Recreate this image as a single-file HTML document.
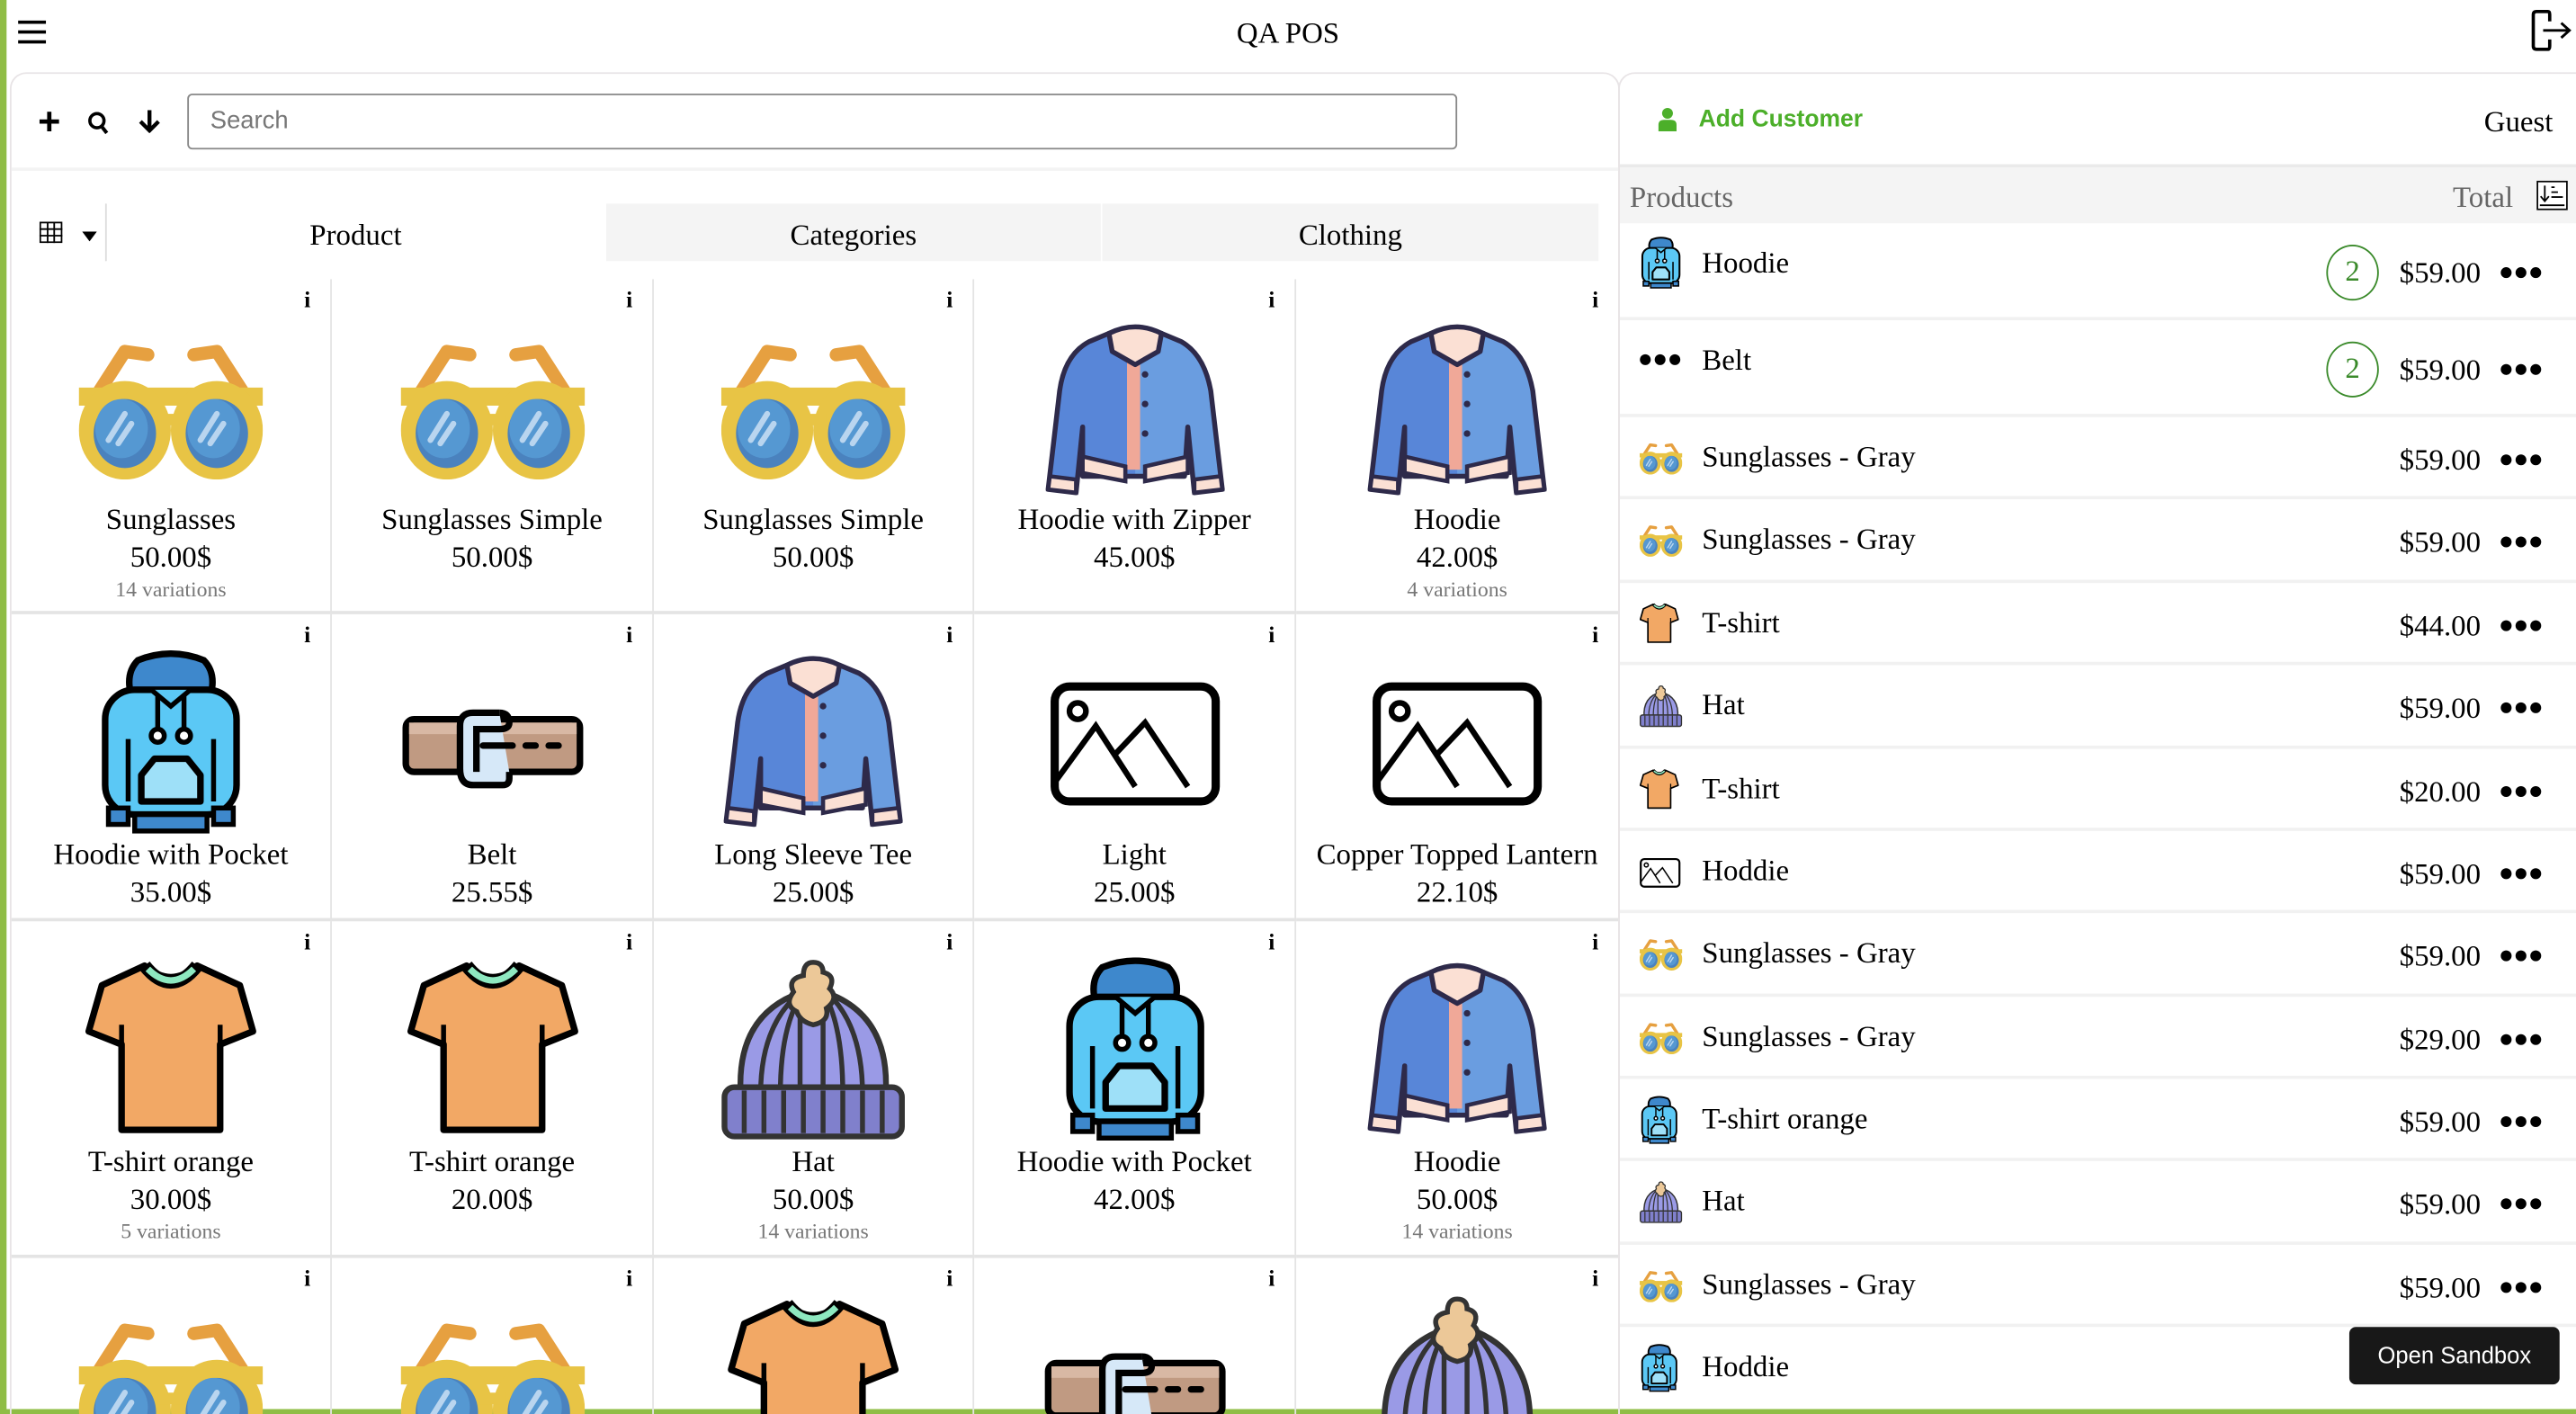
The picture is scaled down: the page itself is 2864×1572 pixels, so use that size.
<!DOCTYPE html>
<html><head><meta charset="utf-8">
<style>
*{box-sizing:border-box;margin:0;padding:0}
html,body{width:2864px;height:1572px;overflow:hidden;background:#fff}
#w{position:absolute;left:0;top:0;width:1568px;height:861px;transform:scale(1.82653,1.82578);transform-origin:0 0;font-family:"Liberation Serif",serif;color:#000;overflow:hidden}
.a{position:absolute}
.cell{position:absolute;border-right:1px solid #e4e4e4;border-bottom:2px solid #e4e4e4;overflow:hidden}
.cell .i{position:absolute;right:12px;top:6px;font:bold 14px "Liberation Serif",serif}
.cell svg{position:absolute;left:50%;top:22px;transform:translateX(-50%)}
.cell .n{position:absolute;left:0;right:0;top:135px;text-align:center;font-size:18px;line-height:23px;white-space:nowrap}
.cell .p{position:absolute;left:0;right:0;top:158px;text-align:center;font-size:18px;line-height:23px}
.cell .v{position:absolute;left:0;right:0;top:180px;text-align:center;font-size:13px;line-height:18px;color:#777}
.row{position:absolute;left:986px;width:582px;border-bottom:2px solid #f1f1f1}
.row svg{position:absolute;left:12px}
.row .t{position:absolute;left:50px;font-size:18px;line-height:22px}
.row .pr{position:absolute;right:58px;font-size:18px;line-height:22px}
.row svg.d{position:absolute;left:auto;right:21px}
.q{position:absolute;left:430px;width:32px;height:34px;border:1.5px solid #3a8a2a;border-radius:50%;color:#3a8a2a;text-align:center;font-size:18px;line-height:31px}
</style></head><body>
<svg width="0" height="0" style="position:absolute">
<defs>
<symbol id="dt" viewBox="0 0 25 8"><circle cx="3.5" cy="4" r="3.3"/><circle cx="12.5" cy="4" r="3.3"/><circle cx="21.5" cy="4" r="3.3"/></symbol>
<symbol id="sg" viewBox="0 0 112 86">
<path d="M10 36 L28 8 L42 10 M102 36 L84 8 L70 10" fill="none" stroke="#e6a040" stroke-width="8" stroke-linecap="round" stroke-linejoin="round"/>
<rect x="0" y="30" width="112" height="11" fill="#e8c445"/>
<ellipse cx="28" cy="56" rx="28" ry="30" fill="#e8c445"/>
<ellipse cx="84" cy="56" rx="28" ry="30" fill="#e8c445"/>
<rect x="48" y="46" width="16" height="7" fill="#e8c445"/>
<ellipse cx="28" cy="58" rx="19" ry="21" fill="#4a82be"/>
<ellipse cx="84" cy="58" rx="19" ry="21" fill="#4a82be"/>
<ellipse cx="26" cy="55" rx="16" ry="18" fill="#5598d2"/>
<ellipse cx="82" cy="55" rx="16" ry="18" fill="#5598d2"/>
<path d="M18 62 L28 46 M24 64 L32 52 M74 62 L84 46 M80 64 L88 52" stroke="#b9d5ef" stroke-width="3.5" stroke-linecap="round"/>
</symbol>
<symbol id="jk" viewBox="0 0 112 112">
<path d="M40 9 L28 14 Q13 22 10 44 L3 104 L20 106 L24 66 L24 96 L86 96 L88 66 L92 106 L109 104 L102 44 Q98 22 84 14 L72 9 Z" fill="#5886d8"/>
<path d="M56 20 L56 96 L86 96 L88 66 L92 106 L109 104 L102 44 Q98 22 84 14 L72 9 Z" fill="#6a9de0"/>
<path d="M40 9 L28 14 Q13 22 10 44 L3 104 L20 106 L24 66 L24 96 L86 96 L88 66 L92 106 L109 104 L102 44 Q98 22 84 14 L72 9 Z" fill="none" stroke="#2e2a4a" stroke-width="3" stroke-linejoin="round"/>
<rect x="51" y="22" width="8" height="70" fill="#f0a898"/>
<path d="M40 9 Q56 1 72 9 L70 20 L56 28 L42 20 Z" fill="#fbe0d4" stroke="#2e2a4a" stroke-width="3" stroke-linejoin="round"/>
<path d="M24 84 L50 90 L50 99 L24 94 Z M62 90 L88 84 L88 94 L62 99 Z" fill="#fbe0d4" stroke="#2e2a4a" stroke-width="2.5"/>
<path d="M4 96 L20 98 L20 106 L3 104 Z M92 98 L108 96 L109 104 L92 106 Z" fill="#fbe0d4" stroke="#2e2a4a" stroke-width="2.5"/>
<circle cx="62" cy="34" r="2" fill="#2e2a4a"/><circle cx="62" cy="52" r="2" fill="#2e2a4a"/><circle cx="62" cy="70" r="2" fill="#2e2a4a"/>
</symbol>
<symbol id="hd" viewBox="0 0 92 112">
<path d="M26 6 Q46 -2 66 6 Q74 14 70 28 L22 28 Q18 14 26 6 Z" fill="#3e88cc" stroke="#000" stroke-width="4"/>
<rect x="6" y="24" width="80" height="76" rx="18" fill="#5bc8f5" stroke="#000" stroke-width="4"/>
<path d="M34 24 L46 34 L58 24" fill="#5bc8f5" stroke="#000" stroke-width="3"/>
<path d="M38 28 V48 M54 28 V48" stroke="#000" stroke-width="3"/>
<circle cx="38" cy="52" r="4" fill="#fff" stroke="#000" stroke-width="3"/><circle cx="54" cy="52" r="4" fill="#fff" stroke="#000" stroke-width="3"/>
<path d="M20 54 V92 M72 54 V92" stroke="#000" stroke-width="3"/>
<path d="M28 76 L36 66 L56 66 L64 76 L64 92 L28 92 Z" fill="#9ee0f8" stroke="#000" stroke-width="4" stroke-linejoin="round"/>
<rect x="8" y="96" width="12" height="10" fill="#3e88cc" stroke="#000" stroke-width="3"/>
<rect x="72" y="96" width="12" height="10" fill="#3e88cc" stroke="#000" stroke-width="3"/>
<rect x="24" y="100" width="44" height="10" fill="#3e88cc" stroke="#000" stroke-width="3"/>
</symbol>
<symbol id="bt" viewBox="0 0 112 58">
<rect x="3" y="14" width="106" height="32" rx="5" fill="#c09a82" stroke="#000" stroke-width="4"/>
<rect x="5" y="16" width="102" height="7" fill="#d8b8a4"/>
<path d="M60 10 H44 Q36 10 36 18 V44 Q36 54 44 54 H62 Q66 54 66 50 V46" fill="#d6e8f8" stroke="#000" stroke-width="4"/>
<path d="M60 10 Q66 10 66 16 Q66 20 60 20 H46 V46" fill="none" stroke="#000" stroke-width="4"/>
<path d="M50 30 H68 M76 30 H82 M90 30 H96" stroke="#000" stroke-width="4" stroke-linecap="round"/>
</symbol>
<symbol id="ph" viewBox="0 0 104 76">
<rect x="3" y="3" width="98" height="70" rx="9" fill="#fff" stroke="#000" stroke-width="5"/>
<circle cx="17" cy="18" r="5" fill="none" stroke="#000" stroke-width="3.5"/>
<path d="M4 60 L28 27 L52 64 M40 44 L58 25 L84 64" fill="none" stroke="#000" stroke-width="3.5"/>
</symbol>
<symbol id="ts" viewBox="0 0 104 108">
<path d="M36 4 L10 16 L2 44 L22 52 L22 104 L82 104 L82 52 L102 44 L94 16 L68 4 Q52 18 36 4 Z" fill="#f2a865" stroke="#000" stroke-width="4" stroke-linejoin="round"/>
<path d="M36 4 Q52 24 68 4" fill="none" stroke="#000" stroke-width="8"/>
<path d="M38 6 Q52 20 66 6" fill="none" stroke="#8ee8c0" stroke-width="4"/>
<path d="M22 52 V40 M82 52 V40" stroke="#000" stroke-width="3"/>
</symbol>
<symbol id="ht" viewBox="0 0 112 110">
<path d="M12 84 Q8 30 56 18 Q104 30 100 84 Z" fill="#9a9ae6" stroke="#333" stroke-width="3.5"/>
<path d="M24 82 Q24 44 44 24 M36 82 Q36 40 50 20 M48 82 V20 M62 82 V20 M74 82 Q74 40 62 20 M86 82 Q86 44 68 24" fill="none" stroke="#333" stroke-width="3"/>
<path d="M56 2 q6 0 6 6 q8 2 4 10 q6 6 -2 12 q2 8 -8 10 q-8 -2 -10 -8 q-8 -4 -2 -12 q-4 -8 6 -10 q0 -8 6 -8 Z" fill="#ecc898" stroke="#333" stroke-width="3"/>
<rect x="2" y="78" width="108" height="30" rx="6" fill="#8080cc" stroke="#333" stroke-width="3.5"/>
<path d="M14 80 V106 M26 80 V106 M38 80 V106 M50 80 V106 M62 80 V106 M74 80 V106 M86 80 V106 M98 80 V106" stroke="#333" stroke-width="3"/>
</symbol>
</defs></svg>
<div id="w">
<div class="a" style="left:0;top:0;width:4px;height:861px;background:#8fbd45"></div>
<div class="a" style="left:0;top:858px;width:1568px;height:3px;background:#8fbd45"></div>
<svg class="a" style="left:11px;top:12px" width="17" height="15"><path d="M0 1.5H17M0 7.5H17M0 13.5H17" stroke="#000" stroke-width="2"/></svg>
<div class="a" style="left:684px;top:9px;width:200px;text-align:center;font-size:18px;line-height:22px">QA POS</div>
<svg class="a" style="left:1540px;top:5px" width="26" height="27"><path d="M11 2H4Q2 2 2 4V23Q2 25 4 25H11Q12 25 12 23V19M12 8V4Q12 2 11 2" fill="none" stroke="#000" stroke-width="2"/><path d="M8 13.5H24M19 9L24 13.5L19 18" fill="none" stroke="#000" stroke-width="1.6"/></svg>
<div class="a" style="left:6px;top:44px;width:980px;height:830px;border:1.5px solid #e8e4e6;border-radius:10px"></div>
<svg class="a" style="left:24px;top:68px" width="12" height="12"><path d="M6 0V12M0 6H12" stroke="#000" stroke-width="2.6"/></svg>
<svg class="a" style="left:53px;top:67px" width="14" height="15"><circle cx="6" cy="6.5" r="4.3" fill="none" stroke="#000" stroke-width="2"/><path d="M8.5 9.5L12 14" stroke="#000" stroke-width="2.2"/></svg>
<svg class="a" style="left:84px;top:67px" width="14" height="14"><path d="M7 0V12M1.5 7L7 12.5L12.5 7" fill="none" stroke="#000" stroke-width="2.4"/></svg>
<div class="a" style="left:114px;top:57px;width:773px;height:34px;border:1.3px solid #888;border-radius:3px;font:15px 'Liberation Sans',sans-serif;color:#777;padding:7px 13px">Search</div>
<div class="a" style="left:7px;top:102px;width:978px;height:2px;background:#f3f3f3"></div>
<svg class="a" style="left:24px;top:135px" width="14" height="13"><rect x="0.5" y="0.5" width="13" height="12" fill="none" stroke="#000"/><path d="M0 4.5H14M0 8.5H14M5 0V13M9 0V13" stroke="#000"/></svg>
<svg class="a" style="left:50px;top:141px" width="9" height="6"><path d="M0 0H9L4.5 6Z"/></svg>
<div class="a" style="left:64px;top:124px;width:1px;height:35px;background:#ddd"></div>
<div class="a" style="left:65px;top:124px;width:303px;height:35px;text-align:center;font-size:18px;line-height:38px">Product</div>
<div class="a" style="left:369px;top:124px;width:301px;height:35px;background:#f4f4f4;text-align:center;font-size:18px;line-height:38px">Categories</div>
<div class="a" style="left:671px;top:124px;width:302px;height:35px;background:#f4f4f4;text-align:center;font-size:18px;line-height:38px">Clothing</div>

<div class="cell" style="left:7px;top:170px;width:195px;height:204px"><span class="i">i</span><svg width="112" height="86" style="top:36px"><use href="#sg"/></svg><div class="n">Sunglasses</div><div class="p">50.00$</div><div class="v">14 variations</div></div>
<div class="cell" style="left:202px;top:170px;width:196px;height:204px"><span class="i">i</span><svg width="112" height="86" style="top:36px"><use href="#sg"/></svg><div class="n">Sunglasses Simple</div><div class="p">50.00$</div></div>
<div class="cell" style="left:398px;top:170px;width:195px;height:204px"><span class="i">i</span><svg width="112" height="86" style="top:36px"><use href="#sg"/></svg><div class="n">Sunglasses Simple</div><div class="p">50.00$</div></div>
<div class="cell" style="left:593px;top:170px;width:196px;height:204px"><span class="i">i</span><svg width="112" height="112" style="top:24px"><use href="#jk"/></svg><div class="n">Hoodie with Zipper</div><div class="p">45.00$</div></div>
<div class="cell" style="left:789px;top:170px;width:196px;height:204px;border-right:none"><span class="i">i</span><svg width="112" height="112" style="top:24px"><use href="#jk"/></svg><div class="n">Hoodie</div><div class="p">42.00$</div><div class="v">4 variations</div></div>
<div class="cell" style="left:7px;top:374px;width:195px;height:187px"><span class="i">i</span><svg width="92" height="112" style="top:22px"><use href="#hd"/></svg><div class="n">Hoodie with Pocket</div><div class="p">35.00$</div></div>
<div class="cell" style="left:202px;top:374px;width:196px;height:187px"><span class="i">i</span><svg width="112" height="58" style="top:50px"><use href="#bt"/></svg><div class="n">Belt</div><div class="p">25.55$</div></div>
<div class="cell" style="left:398px;top:374px;width:195px;height:187px"><span class="i">i</span><svg width="112" height="112" style="top:22px"><use href="#jk"/></svg><div class="n">Long Sleeve Tee</div><div class="p">25.00$</div></div>
<div class="cell" style="left:593px;top:374px;width:196px;height:187px"><span class="i">i</span><svg width="104" height="76" style="top:41px"><use href="#ph"/></svg><div class="n">Light</div><div class="p">25.00$</div></div>
<div class="cell" style="left:789px;top:374px;width:196px;height:187px;border-right:none"><span class="i">i</span><svg width="104" height="76" style="top:41px"><use href="#ph"/></svg><div class="n">Copper Topped Lantern</div><div class="p">22.10$</div></div>
<div class="cell" style="left:7px;top:561px;width:195px;height:205px"><span class="i">i</span><svg width="104" height="108" style="top:23px"><use href="#ts"/></svg><div class="n">T-shirt orange</div><div class="p">30.00$</div><div class="v">5 variations</div></div>
<div class="cell" style="left:202px;top:561px;width:196px;height:205px"><span class="i">i</span><svg width="104" height="108" style="top:23px"><use href="#ts"/></svg><div class="n">T-shirt orange</div><div class="p">20.00$</div></div>
<div class="cell" style="left:398px;top:561px;width:195px;height:205px"><span class="i">i</span><svg width="112" height="110" style="top:23px"><use href="#ht"/></svg><div class="n">Hat</div><div class="p">50.00$</div><div class="v">14 variations</div></div>
<div class="cell" style="left:593px;top:561px;width:196px;height:205px"><span class="i">i</span><svg width="92" height="112" style="top:22px"><use href="#hd"/></svg><div class="n">Hoodie with Pocket</div><div class="p">42.00$</div></div>
<div class="cell" style="left:789px;top:561px;width:196px;height:205px;border-right:none"><span class="i">i</span><svg width="112" height="112" style="top:22px"><use href="#jk"/></svg><div class="n">Hoodie</div><div class="p">50.00$</div><div class="v">14 variations</div></div>
<div class="cell" style="left:7px;top:766px;width:195px;height:95px;border-bottom:none"><span class="i">i</span><svg width="112" height="86" style="top:36px"><use href="#sg"/></svg></div>
<div class="cell" style="left:202px;top:766px;width:196px;height:95px;border-bottom:none"><span class="i">i</span><svg width="112" height="86" style="top:36px"><use href="#sg"/></svg></div>
<div class="cell" style="left:398px;top:766px;width:195px;height:95px;border-bottom:none"><span class="i">i</span><svg width="104" height="108" style="top:24px"><use href="#ts"/></svg></div>
<div class="cell" style="left:593px;top:766px;width:196px;height:95px;border-bottom:none"><span class="i">i</span><svg width="112" height="58" style="top:50px"><use href="#bt"/></svg></div>
<div class="cell" style="left:789px;top:766px;width:196px;height:95px;border-bottom:none;border-right:none"><span class="i">i</span><svg width="112" height="110" style="top:23px"><use href="#ht"/></svg></div>

<div class="a" style="left:985px;top:44px;width:600px;height:830px;border:1.5px solid #e8e4e6;border-radius:10px"></div>
<svg class="a" style="left:1009px;top:65px" width="12" height="15"><circle cx="6" cy="4" r="3.3" fill="#4caf2a"/><path d="M0.5 15V11Q0.5 8 4 8H8Q11.5 8 11.5 11V15Z" fill="#4caf2a"/></svg>
<div class="a" style="left:1034px;top:63px;font:bold 14.5px 'Liberation Sans',sans-serif;color:#4caf2a;line-height:20px">Add Customer</div>
<div class="a" style="right:14px;top:63px;font-size:18px;line-height:22px">Guest</div>
<div class="a" style="left:986px;top:100px;width:582px;height:2px;background:#eaeaea"></div>
<div class="a" style="left:986px;top:102px;width:582px;height:34px;background:#f4f4f4"></div>
<div class="a" style="left:992px;top:109px;font-size:18px;line-height:22px;color:#666">Products</div>
<div class="a" style="left:1493px;top:109px;font-size:18px;line-height:22px;color:#666">Total</div>
<svg class="a" style="left:1544px;top:110px" width="19" height="18"><rect x="0.5" y="0.5" width="18" height="17" fill="#fff" stroke="#000"/><path d="M5 3V12M2.5 9.5L5 12.5L7.5 9.5M9 4H11M9 7H13M9 10H16M2 15H17" fill="none" stroke="#000" stroke-width="1"/></svg>

<div class="row" style="top:136px;height:59px"><svg width="26" height="32" style="top:8px"><use href="#hd"/></svg><div class="t" style="top:13px">Hoodie</div><div class="q" style="top:13px">2</div><div class="pr" style="top:19px">$59.00</div><svg class="d" width="25" height="8" style="top:26px"><use href="#dt"/></svg></div>
<div class="row" style="top:195px;height:59px"><svg width="25" height="8" style="top:20px"><use href="#dt"/></svg><div class="t" style="top:13px">Belt</div><div class="q" style="top:13px">2</div><div class="pr" style="top:19px">$59.00</div><svg class="d" width="25" height="8" style="top:26px"><use href="#dt"/></svg></div>
<div class="row" style="top:254px;height:50px"><svg width="26" height="20" style="top:15px"><use href="#sg"/></svg><div class="t" style="top:13px">Sunglasses - Gray</div><div class="pr" style="top:15px">$59.00</div><svg class="d" width="25" height="8" style="top:22px"><use href="#dt"/></svg></div>
<div class="row" style="top:304px;height:51px"><svg width="26" height="20" style="top:15px"><use href="#sg"/></svg><div class="t" style="top:13px">Sunglasses - Gray</div><div class="pr" style="top:15px">$59.00</div><svg class="d" width="25" height="8" style="top:22px"><use href="#dt"/></svg></div>
<div class="row" style="top:355px;height:50px"><svg width="24" height="27" style="top:11px"><use href="#ts"/></svg><div class="t" style="top:13px">T-shirt</div><div class="pr" style="top:15px">$44.00</div><svg class="d" width="25" height="8" style="top:22px"><use href="#dt"/></svg></div>
<div class="row" style="top:405px;height:51px"><svg width="26" height="26" style="top:12px"><use href="#ht"/></svg><div class="t" style="top:13px">Hat</div><div class="pr" style="top:15px">$59.00</div><svg class="d" width="25" height="8" style="top:22px"><use href="#dt"/></svg></div>
<div class="row" style="top:456px;height:50px"><svg width="24" height="27" style="top:11px"><use href="#ts"/></svg><div class="t" style="top:13px">T-shirt</div><div class="pr" style="top:15px">$20.00</div><svg class="d" width="25" height="8" style="top:22px"><use href="#dt"/></svg></div>
<div class="row" style="top:506px;height:50px"><svg width="25" height="19" style="top:16px"><use href="#ph"/></svg><div class="t" style="top:13px">Hoddie</div><div class="pr" style="top:15px">$59.00</div><svg class="d" width="25" height="8" style="top:22px"><use href="#dt"/></svg></div>
<div class="row" style="top:556px;height:51px"><svg width="26" height="20" style="top:15px"><use href="#sg"/></svg><div class="t" style="top:13px">Sunglasses - Gray</div><div class="pr" style="top:15px">$59.00</div><svg class="d" width="25" height="8" style="top:22px"><use href="#dt"/></svg></div>
<div class="row" style="top:607px;height:50px"><svg width="26" height="20" style="top:15px"><use href="#sg"/></svg><div class="t" style="top:13px">Sunglasses - Gray</div><div class="pr" style="top:15px">$29.00</div><svg class="d" width="25" height="8" style="top:22px"><use href="#dt"/></svg></div>
<div class="row" style="top:657px;height:50px"><svg width="24" height="30" style="top:10px"><use href="#hd"/></svg><div class="t" style="top:13px">T-shirt orange</div><div class="pr" style="top:15px">$59.00</div><svg class="d" width="25" height="8" style="top:22px"><use href="#dt"/></svg></div>
<div class="row" style="top:707px;height:51px"><svg width="26" height="26" style="top:12px"><use href="#ht"/></svg><div class="t" style="top:13px">Hat</div><div class="pr" style="top:15px">$59.00</div><svg class="d" width="25" height="8" style="top:22px"><use href="#dt"/></svg></div>
<div class="row" style="top:758px;height:50px"><svg width="26" height="20" style="top:15px"><use href="#sg"/></svg><div class="t" style="top:13px">Sunglasses - Gray</div><div class="pr" style="top:15px">$59.00</div><svg class="d" width="25" height="8" style="top:22px"><use href="#dt"/></svg></div>
<div class="row" style="top:808px;height:51px;border-bottom:none"><svg width="24" height="30" style="top:10px"><use href="#hd"/></svg><div class="t" style="top:13px">Hoddie</div></div>
<div class="a" style="left:1430px;top:808px;width:128px;height:35px;background:#181818;border-radius:4px;color:#fff;font:14px 'Liberation Sans',sans-serif;text-align:center;line-height:35px">Open Sandbox</div>
</div>
</body></html>
